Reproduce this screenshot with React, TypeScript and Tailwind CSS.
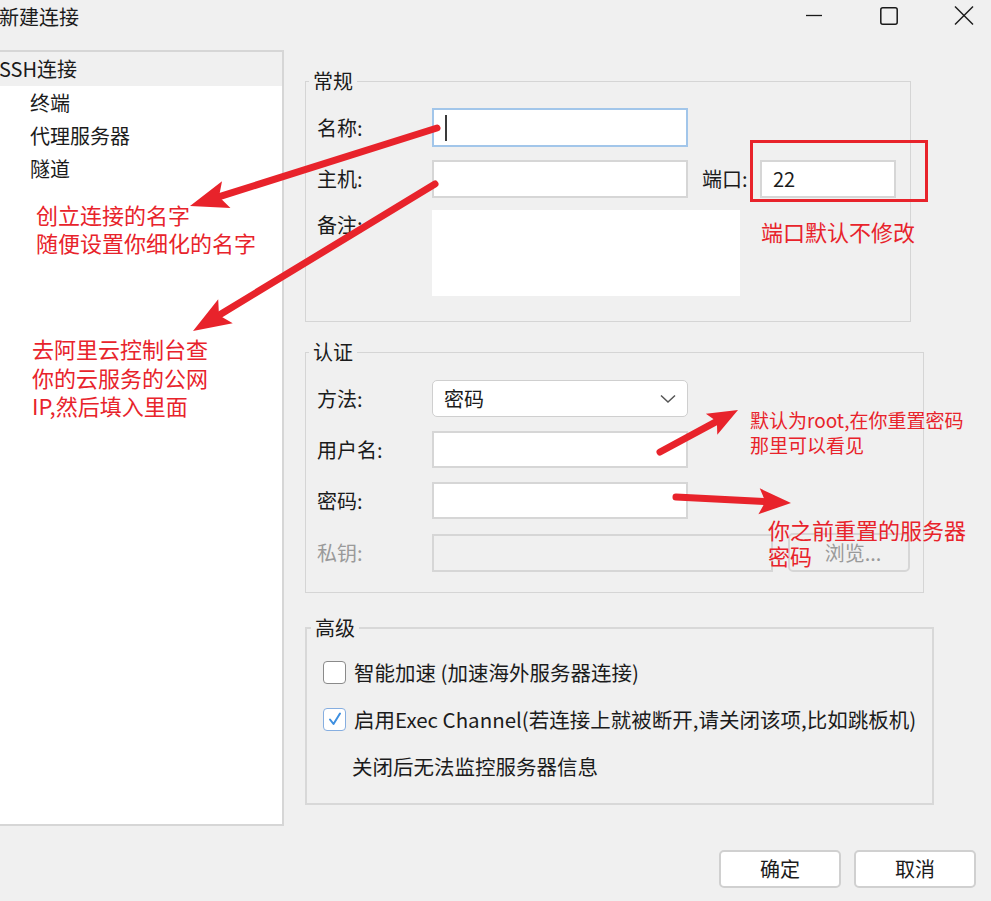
import React from "react";

const RED = "#e8232b";

function Arrow({ x1, y1, x2, y2, len = 34, half = 13, w = 7 }: { x1: number; y1: number; x2: number; y2: number; len?: number; half?: number; w?: number }) {
  const dx = x2 - x1;
  const dy = y2 - y1;
  const d = Math.hypot(dx, dy);
  const ux = dx / d;
  const uy = dy / d;
  const bx = x2 - ux * len;
  const by = y2 - uy * len;
  const px = -uy;
  const py = ux;
  const nx = x2 - ux * (len * 0.8);
  const ny = y2 - uy * (len * 0.8);
  const pts = `${x2},${y2} ${bx + px * half},${by + py * half} ${nx},${ny} ${bx - px * half},${by - py * half}`;
  return (
    <g>
      <line x1={x1} y1={y1} x2={nx + ux * 2} y2={ny + uy * 2} stroke={RED} strokeWidth={w} strokeLinecap="round" />
      <polygon points={pts} fill={RED} />
    </g>
  );
}

function Label({ children, className = "" }: { children: React.ReactNode; className?: string }) {
  return <div className={`w-[115px] shrink-0 text-[20px] leading-[24px] ${className}`}>{children}</div>;
}

export default function App() {
  return (
    <div className="relative w-[991px] h-[901px] overflow-hidden bg-[#f0f0f0] text-[#1b1b1b] font-['Noto_Sans_CJK_SC','Noto_Sans',sans-serif]">
      {/* Title bar */}
      <div className="flex h-[34px] items-center justify-between">
        <div className="-ml-[1px] text-[20px] leading-[34px]">新建连接</div>
        <div className="mr-[17px] flex items-center">
          <svg width="16" height="34" viewBox="0 0 16 34">
            <line x1="0" y1="15.5" x2="16" y2="15.5" stroke="#1a1a1a" strokeWidth="1.3" />
          </svg>
          <svg width="18" height="34" viewBox="0 0 18 34" className="ml-[58px]">
            <rect x="0.8" y="7.8" width="16.4" height="16.4" rx="2" fill="none" stroke="#1a1a1a" strokeWidth="1.5" />
          </svg>
          <svg width="20" height="34" viewBox="0 0 20 34" className="ml-[56px]">
            <line x1="1" y1="6.5" x2="19" y2="24.5" stroke="#1a1a1a" strokeWidth="1.5" />
            <line x1="19" y1="6.5" x2="1" y2="24.5" stroke="#1a1a1a" strokeWidth="1.5" />
          </svg>
        </div>
      </div>

      {/* Body */}
      <div className="mt-[16px] flex">
        {/* Left tree */}
        <div className="h-[776px] w-[284px] shrink-0 border-[2px] border-l-0 border-[#d6d6d6] bg-white">
          <div className="h-[34px] bg-[#f0f0f0] -ml-[1px] text-[20px] leading-[34px]">SSH连接</div>
          <div className="pl-[30px] text-[20px] leading-[33px]">
            <div>终端</div>
            <div>代理服务器</div>
            <div>隧道</div>
          </div>
        </div>

        {/* Right column */}
        <div className="ml-[21px] flex flex-col">
          {/* 常规 */}
          <fieldset className="mt-[19px] h-[253px] w-[606px] border border-[#d5d5d5] pl-[11px] pt-[15px]">
            <legend className="-ml-[8px] px-[4px] text-[20px] leading-[24px]">常规</legend>
            <div className="flex items-center">
              <Label>名称:</Label>
              <div className="flex h-[39px] w-[256px] items-center border-2 border-[#a2c6ea] bg-white">
                <div className="ml-[11px] h-[26px] w-[2px] bg-[#3a3a3a]" />
              </div>
            </div>
            <div className="mt-[13px] flex items-center">
              <Label>主机:</Label>
              <div className="h-[38px] w-[256px] border-2 border-[#d6d6d6] bg-white" />
              <div className="ml-[14px] w-[58px] text-[20px] leading-[24px]">端口:</div>
              <div className="flex h-[38px] w-[136px] items-center border-2 border-[#d6d6d6] bg-white pl-[11px] text-[20px]">22</div>
            </div>
            <div className="mt-[12px] flex items-start">
              <Label className="pt-[3px]">备注:</Label>
              <div className="h-[86px] w-[308px] bg-white" />
            </div>
          </fieldset>

          {/* 认证 */}
          <fieldset className="mt-[18px] h-[253px] w-[619px] border border-[#d5d5d5] pl-[11px] pt-[16px]">
            <legend className="-ml-[8px] px-[4px] text-[20px] leading-[24px]">认证</legend>
            <div className="flex items-center">
              <Label>方法:</Label>
              <div className="flex h-[37px] w-[256px] items-center justify-between rounded-[5px] border border-[#cfcfcf] bg-white pl-[11px] pr-[11px] text-[20px]">
                <span>密码</span>
                <svg width="16" height="10" viewBox="0 0 16 10">
                  <polyline points="1,1.5 8,8 15,1.5" fill="none" stroke="#555" strokeWidth="1.5" />
                </svg>
              </div>
            </div>
            <div className="mt-[14px] flex items-center">
              <Label>用户名:</Label>
              <div className="h-[37px] w-[256px] border-2 border-[#d6d6d6] bg-white" />
            </div>
            <div className="mt-[14px] flex items-center">
              <Label>密码:</Label>
              <div className="h-[37px] w-[256px] border-2 border-[#d6d6d6] bg-white" />
            </div>
            <div className="mt-[14px] flex items-center">
              <Label className="text-[#9a9a9a]">私钥:</Label>
              <div className="h-[38px] w-[341px] border-2 border-[#d6d6d6] bg-[#f0f0f0]" />
              <div className="ml-[15px] flex h-[39px] w-[122px] items-center justify-center rounded-[5px] border-2 border-[#d6d6d6] bg-[#f0f0f0] pl-[8px] text-[20px] text-[#9a9a9a]">
                浏览...
              </div>
            </div>
          </fieldset>

          {/* 高级 */}
          <fieldset className="mt-[23px] h-[189px] w-[629px] border-2 border-[#d8d8d8] pl-[16px] pt-[20px]">
            <legend className="-ml-[12px] px-[4px] text-[20px] leading-[24px]">高级</legend>
            <div className="flex items-center">
              <div className="h-[23px] w-[23px] rounded-[4px] border-[1.5px] border-[#8a8a8a] bg-white" />
              <div className="ml-[8px] text-[20.5px] leading-[24px]">智能加速 (加速海外服务器连接)</div>
            </div>
            <div className="mt-[23px] flex items-center">
              <div className="flex h-[23px] w-[23px] items-center justify-center rounded-[4px] border-[1.5px] border-[#86aee0] bg-white">
                <svg width="16" height="16" viewBox="0 0 16 16">
                  <polyline points="3,8.5 6.5,13 13,2.5" fill="none" stroke="#3d8fe0" strokeWidth="2" strokeLinecap="round" strokeLinejoin="round" />
                </svg>
              </div>
              <div className="ml-[8px] text-[20.5px] leading-[24px]">启用Exec Channel(若连接上就被断开,请关闭该项,比如跳板机)</div>
            </div>
            <div className="mt-[23px] pl-[29px] text-[20.5px] leading-[24px]">关闭后无法监控服务器信息</div>
          </fieldset>

          {/* Buttons */}
          <div className="mt-[45px] flex w-[671px] justify-end gap-[13px]">
            <div className="flex h-[38px] w-[122px] items-center justify-center rounded-[5px] border-2 border-[#d0d0d0] bg-white text-[20px]">确定</div>
            <div className="flex h-[38px] w-[122px] items-center justify-center rounded-[5px] border-2 border-[#d0d0d0] bg-white text-[20px]">取消</div>
          </div>
        </div>
      </div>

      {/* Annotations overlay */}
      <div className="absolute left-[750px] top-[140px] h-[62px] w-[178px] border-[3px] border-[#e8232b]" />

      <svg className="pointer-events-none absolute left-0 top-0" width="991" height="901" viewBox="0 0 991 901">
        <Arrow x1={437} y1={128} x2={190} y2={206} len={38} half={14} />
        <Arrow x1={435} y1={184} x2={193} y2={331} len={38} half={14} />
        <Arrow x1={660} y1={452} x2={738} y2={410} len={30} half={12} />
        <Arrow x1={676} y1={497} x2={791} y2={503} len={32} half={13} />
      </svg>

      <div className="pointer-events-none absolute left-[36px] top-[200px] text-[22px] leading-[28px] text-[#e8232b]">
        <div>创立连接的名字</div>
        <div>随便设置你细化的名字</div>
      </div>
      <div className="pointer-events-none absolute left-[32px] top-[334px] text-[22px] leading-[28.5px] text-[#e8232b]">
        <div>去阿里云控制台查</div>
        <div>你的云服务的公网</div>
        <div>IP,然后填入里面</div>
      </div>
      <div className="pointer-events-none absolute left-[761px] top-[217px] text-[22px] leading-[28px] text-[#e8232b]">端口默认不修改</div>
      <div className="pointer-events-none absolute left-[750px] top-[407px] text-[19px] leading-[25px] text-[#e8232b]">
        <div>默认为root,在你重置密码</div>
        <div>那里可以看见</div>
      </div>
      <div className="pointer-events-none absolute left-[768px] top-[516px] text-[22px] leading-[26px] text-[#e8232b]">
        <div>你之前重置的服务器</div>
        <div>密码</div>
      </div>
    </div>
  );
}
